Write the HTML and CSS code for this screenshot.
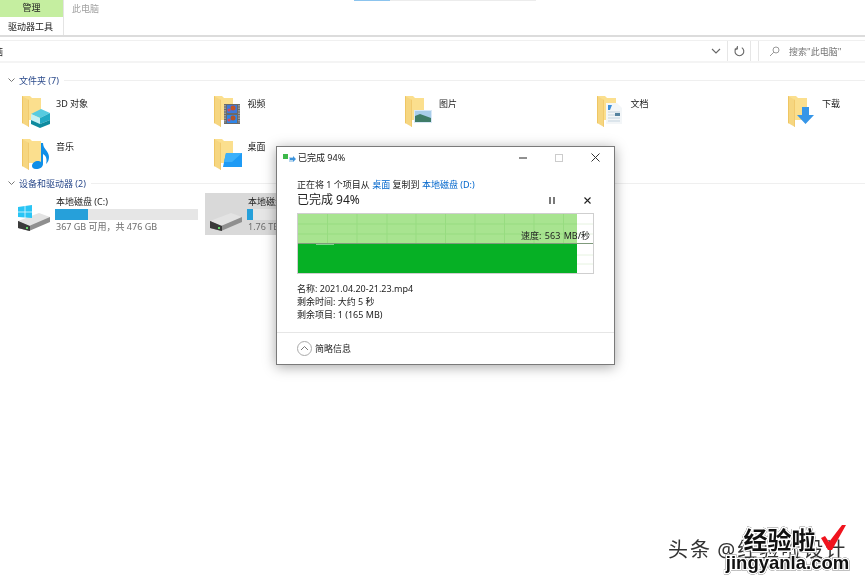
FILE: index.html
```html
<!DOCTYPE html>
<html lang="zh-CN">
<head>
    <meta charset="UTF-8">
    <title>此电脑</title>
    <link rel="stylesheet" href="styles.css">
</head>
<body>
    <svg class="defs" width="0" height="0">
        <symbol id="folder" viewBox="0 0 32 34">
            <path d="M2 1h8l2 2h9v22H2z" fill="#fbdf8e"/>
            <path d="M2 1l7 4v27l-7-4z" fill="#f6d680"/>
            <path d="M2 1v27l.8.5V1.500z" fill="#eec25c"/>
            <path d="M9 5v27l-.8-.5V4.500z" fill="#f0c76a"/>
        </symbol>
        <symbol id="drive" viewBox="0 0 32 18">
            <path d="M0 8L21 0l11 4v4L10 13z" fill="#e3e3e3"/>
            <path d="M0 8l11 5 21-9v5L11 18 0 15z" fill="#8f8f8f"/>
            <path d="M0 8l12 5v5L0 15z" fill="#3a3a3a"/>
            <rect x="8" y="14" width="2" height="2" fill="#63d86a"/>
        </symbol>
    </svg>

    <div class="page">
        <!-- Ribbon -->
        <header class="ribbon">
            <div class="tab-group">
                <div class="tab-manage">管理</div>
                <div class="tab-tools">驱动器工具</div>
            </div>
            <div class="ribbon-title">此电脑</div>
            <div class="ribbon-mark"></div>
        </header>

        <!-- Address bar -->
        <div class="address">
            <div class="path">
                <span class="path-text">电脑</span>
                <svg width="10" height="6" viewBox="0 0 10 6"><path d="M1 1l4 4 4-4" fill="none" stroke="#666" stroke-width="1.1"/></svg>
            </div>
            <div class="refresh">
                <svg width="11" height="11" viewBox="0 0 11 11"><path d="M7.8 1.600A4.400 4.400 0 1 1 3 1.600" fill="none" stroke="#666" stroke-width="1.1"/><path d="M3.400 0v3.200H.6" fill="none" stroke="#666" stroke-width="1"/></svg>
            </div>
            <div class="search">
                <svg width="11" height="11" viewBox="0 0 11 11"><circle cx="7" cy="4" r="3" fill="none" stroke="#999"/><path d="M4.800 6.200L1 10" stroke="#999"/></svg>
                <span>搜索"此电脑"</span>
            </div>
        </div>

        <!-- Folders -->
        <div class="group-head">
            <svg width="7" height="5" viewBox="0 0 7 5"><path d="M.5.5l3 3 3-3" fill="none" stroke="#777"/></svg>
            <span>文件夹 (7)</span>
            <i></i>
        </div>
        <div class="folders">
            <div class="folder">
                <svg width="32" height="34" viewBox="0 0 32 34">
                    <use href="#folder" width="32" height="34"/>
                    <path d="M11 19l10-5 9 4-10 5z" fill="#57cbe0"/>
                    <path d="M11 19l9 4v6l-9-4z" fill="#c4f0f3"/>
                    <path d="M20 23l10-5v7l-10 4z" fill="#22a9c4"/>
                    <path d="M11 25l9 4 10-4v4l-10 4-9-4z" fill="#0e8a9e"/>
                </svg>
                <span>3D 对象</span>
            </div>
            <div class="folder">
                <svg width="32" height="34" viewBox="0 0 32 34">
                    <use href="#folder" width="32" height="34"/>
                    <rect x="12" y="9" width="16" height="20" fill="#6a6a6a"/>
                    <path d="M13 10v18M27 10v18" stroke="#c8c8c8" stroke-width="1" stroke-dasharray="1.500 1"/>
                    <rect x="15" y="10" width="10" height="8" fill="#3f78d8"/>
                    <rect x="15" y="20" width="10" height="8" fill="#2f86e8"/>
                    <circle cx="21" cy="13" r="2.500" fill="#c2532a"/>
                    <circle cx="17" cy="15" r="1.500" fill="#d8485a"/>
                    <circle cx="21" cy="23" r="2.500" fill="#b25428"/>
                    <circle cx="17" cy="25" r="1.500" fill="#d8485a"/>
                </svg>
                <span>视频</span>
            </div>
            <div class="folder">
                <svg width="32" height="34" viewBox="0 0 32 34">
                    <use href="#folder" width="32" height="34"/>
                    <rect x="11" y="15" width="18" height="13" fill="#d8e8f8"/>
                    <rect x="12" y="16" width="16" height="11" fill="#a8cdea"/>
                    <path d="M12 21l5-2 11 4v4H12z" fill="#3f7c68"/>
                </svg>
                <span>图片</span>
            </div>
            <div class="folder">
                <svg width="32" height="34" viewBox="0 0 32 34">
                    <use href="#folder" width="32" height="34"/>
                    <path d="M11 8h11l5 5v16H11z" fill="#f3f6f8"/>
                    <path d="M13 10h4l-2 5h-2z" fill="#3d8fd8"/>
                    <path d="M13 17h12M13 20h8M13 23h12M13 26h12" stroke="#c5d4df"/>
                    <rect x="20" y="18" width="5" height="3" fill="#56839f"/>
                </svg>
                <span>文档</span>
            </div>
            <div class="folder">
                <svg width="32" height="34" viewBox="0 0 32 34">
                    <use href="#folder" width="32" height="34"/>
                    <path d="M16 12h7v8h5l-8.500 9L11 20h5z" fill="#3696e8"/>
                </svg>
                <span>下载</span>
            </div>
            <div class="folder">
                <svg width="32" height="34" viewBox="0 0 32 34">
                    <use href="#folder" width="32" height="34"/>
                    <path d="M21 5h2c0 6 6 8 6 14 0 3-1 5-3 7 1-3 1-8-3-10v10c0 3-3 5-7 5-3 0-4-2-4-3 0-3 3-5 6-5 1 0 2 0 3 1z" fill="#0f8fe8"/>
                </svg>
                <span>音乐</span>
            </div>
            <div class="folder">
                <svg width="32" height="34" viewBox="0 0 32 34">
                    <use href="#folder" width="32" height="34"/>
                    <path d="M14 15h16v14H11z" fill="#1e9bf5"/>
                    <path d="M14 15h16L20 24H12z" fill="#3cb0fa"/>
                </svg>
                <span>桌面</span>
            </div>
        </div>

        <!-- Drives -->
        <div class="group-head drives-head">
            <svg width="7" height="5" viewBox="0 0 7 5"><path d="M.5.5l3 3 3-3" fill="none" stroke="#777"/></svg>
            <span>设备和驱动器 (2)</span>
            <i></i>
        </div>
        <div class="drives">
            <div class="drive">
                <svg class="drive-icon" width="32" height="26" viewBox="0 0 32 26">
                    <use href="#drive" y="8" width="32" height="18"/>
                    <path d="M0 2l14-2v13l-14-1z" fill="#29c5f5"/>
                    <path d="M7 1v12M0 7h14" stroke="#e6f8fe" stroke-width=".8"/>
                </svg>
                <div class="drive-info">
                    <div class="drive-name">本地磁盘 (C:)</div>
                    <div class="bar"><div class="bar-fill" style="width: 23%"></div></div>
                    <div class="drive-size">367 GB 可用，共 476 GB</div>
                </div>
            </div>
            <div class="drive selected">
                <svg class="drive-icon" width="32" height="26" viewBox="0 0 32 26">
                    <use href="#drive" y="8" width="32" height="18"/>
                </svg>
                <div class="drive-info">
                    <div class="drive-name">本地磁盘 (D:)</div>
                    <div class="bar"><div class="bar-fill" style="width: 4%"></div></div>
                    <div class="drive-size">1.76 TB 可用，共 1.81 TB</div>
                </div>
            </div>
        </div>

        <!-- Copy progress window -->
        <div class="dialog">
            <div class="dialog-title">
                <svg width="13" height="10" viewBox="0 0 13 10"><rect x="0" y="1" width="5" height="5" fill="#3cb84a"/><rect x="6" y="4" width="4" height="5" fill="#b9d7ef"/><path d="M7 5h3V3l3 3-3 3V7H7z" fill="#3d94dc"/></svg>
                <span class="dialog-name">已完成 94%</span>
                <div class="win-btns">
                    <svg width="8" height="8" viewBox="0 0 8 8"><path d="M0 4h8" stroke="#222"/></svg>
                    <svg width="8" height="8" viewBox="0 0 8 8"><rect x=".5" y=".5" width="7" height="7" fill="none" stroke="#ccc"/></svg>
                    <svg width="9" height="9" viewBox="0 0 9 9"><path d="M.5.5l8 8M8.500.5l-8 8" stroke="#333"/></svg>
                </div>
            </div>
            <div class="dialog-body">
                <div class="copy-line">正在将 1 个项目从 <a>桌面</a> 复制到 <a>本地磁盘 (D:)</a></div>
                <div class="progress-head">
                    <span class="progress-text">已完成 94%</span>
                    <svg width="6" height="7" viewBox="0 0 6 7"><path d="M1 0v7M5 0v7" stroke="#222" stroke-width="1.2"/></svg>
                    <svg width="7" height="7" viewBox="0 0 7 7"><path d="M.5.5l6 6M6.500.5l-6 6" stroke="#222" stroke-width="1.1"/></svg>
                </div>
                <div class="graph">
                    <svg width="295" height="59" viewBox="0 0 295 59">
                        <rect width="295" height="59" fill="#fff"/>
                        <path d="M279 10h16M279 20h16M279 41h16M279 50h16" stroke="#e6f3e0"/>
                        <rect width="279" height="30" fill="#a8e490"/>
                        <path d="M29.500 0v30M59 0v30M89 0v30M118 0v30M147.500 0v30M177 0v30M206.500 0v30M236 0v30M265.500 0v30M0 10h279M0 20h279" stroke="#97dc80"/>
                        <rect y="30" width="279" height="29" fill="#06b025"/>
                        <rect x="18" y="30" width="18" height="1" fill="#7ed58a"/>
                        <path d="M0 29.500h295" stroke="#7f9a7b"/>
                    </svg>
                    <span class="speed">速度: 563 MB/秒</span>
                </div>
                <div class="details">
                    <div>名称: 2021.04.20-21.23.mp4</div>
                    <div>剩余时间: 大约 5 秒</div>
                    <div>剩余项目: 1 (165 MB)</div>
                </div>
            </div>
            <div class="dialog-foot">
                <svg width="15" height="15" viewBox="0 0 15 15"><circle cx="7.500" cy="7.500" r="7" fill="none" stroke="#aaa"/><path d="M4 9l3.500-3.500L11 9" fill="none" stroke="#777"/></svg>
                <span>简略信息</span>
            </div>
        </div>

        <!-- Watermark -->
        <div class="wm-source">头条 @经验啦设计</div>
        <div class="wm-brand">
            <span class="wm-title">经验啦</span>
            <span class="wm-url">jingyanla.com</span>
        </div>
        <svg class="wm-check" width="25" height="26" viewBox="0 0 25 26"><path d="M0 13l4-2 4 6L21 0h4L11 25H7z" fill="#f0141e"/></svg>
    </div>
</body>
</html>
```

FILE: styles.css
```css
/* General styling */
body {
    margin: 0;
    background-color: #fff;
    font-family: "Noto Sans", "Noto Sans CJK SC", sans-serif;
    font-size: 9px;
    color: #222;
}

.defs {
    position: absolute;
}

.page {
    position: relative;
    width: 865px;
    height: 577px;
    overflow: hidden;
    filter: blur(0.3px);
}

svg {
    display: block;
    flex-shrink: 0;
}

/* Ribbon */
.ribbon {
    display: flex;
    height: 35px;
    border-bottom: 2px solid #dcdcdc;
}

.tab-group {
    width: 63px;
    border-right: 1px solid #e4e4e4;
}

.tab-manage {
    height: 17px;
    line-height: 16px;
    background-color: #c5eea0;
    text-align: center;
}

.tab-tools {
    height: 18px;
    line-height: 19px;
    padding-left: 8px;
}

.ribbon-title {
    margin-left: 8px;
    line-height: 17px;
    color: #a0a0a0;
}

.ribbon-mark {
    width: 182px;
    height: 1px;
    margin-left: 255px;
    background: linear-gradient(to right, #8cc4ee 36px, #ececec 36px);
}

/* Address bar */
.address {
    display: flex;
    height: 20px;
    margin-top: 3px;
    border-top: 1px solid #f0f0f0;
    border-bottom: 2px solid #f4f4f4;
}

.path {
    display: flex;
    align-items: center;
    justify-content: space-between;
    width: 727px;
    padding-right: 6px;
    box-sizing: border-box;
    overflow: hidden;
}

.path-text {
    margin-left: -15px;
}

.refresh {
    display: flex;
    align-items: center;
    justify-content: center;
    width: 22px;
    border-left: 1px solid #e6e6e6;
    border-right: 1px solid #e6e6e6;
}

.search {
    display: flex;
    align-items: center;
    gap: 9px;
    flex-grow: 1;
    margin-left: 7px;
    padding-left: 10px;
    border-left: 1px solid #e6e6e6;
    color: #777;
}

/* Groups */
.group-head {
    display: flex;
    align-items: center;
    gap: 4px;
    height: 14px;
    margin-top: 10px;
    padding-left: 8px;
    color: #2b4a8b;
}

.group-head i {
    flex-grow: 1;
    height: 1px;
    margin-left: 1px;
    background-color: #efefef;
}

.drives-head {
    margin-top: 4px;
}

.folders {
    display: grid;
    grid-template-columns: repeat(5, 191.5px);
    row-gap: 9px;
    margin-top: 8px;
    padding-left: 20px;
}

.folder {
    display: flex;
    gap: 4px;
    height: 34px;
    line-height: 17px;
}

.drives {
    display: grid;
    grid-template-columns: repeat(2, 192px);
    margin-top: 3px;
    padding-left: 13px;
}

.drive {
    display: flex;
    gap: 5px;
    width: 190px;
    height: 42px;
    padding: 2px 5px;
    box-sizing: border-box;
}

.drive.selected {
    background-color: #d9d9d9;
}

.drive-icon {
    margin-top: 10px;
}

.drive-info {
    flex-grow: 1;
}

.drive-name {
    height: 13px;
    line-height: 13px;
    padding-left: 1px;
}

.bar {
    height: 11px;
    margin-top: 1px;
    background-color: #e6e6e6;
}

.bar-fill {
    height: 100%;
    background-color: #26a0da;
}

.drive-size {
    line-height: 13px;
    padding-left: 1px;
    color: #6d6d6d;
}

/* Copy dialog */
.dialog {
    position: absolute;
    top: 146px;
    left: 276px;
    width: 337px;
    height: 217px;
    background-color: #fff;
    border: 1px solid #7a7a7a;
    box-shadow: 0 2px 12px rgba(0, 0, 0, 0.35);
}

.dialog-title {
    display: flex;
    align-items: center;
    height: 21px;
    padding-left: 6px;
}

.dialog-name {
    margin-left: 2px;
}

.win-btns {
    display: flex;
    align-items: center;
    gap: 28px;
    margin-left: auto;
    padding-right: 14px;
}

.dialog-body {
    padding: 0 20px 0 20px;
}

.copy-line {
    height: 13px;
    line-height: 13px;
    margin-top: 10px;
}

.copy-line a {
    color: #0066cc;
}

.progress-head {
    display: flex;
    align-items: center;
    height: 15px;
}

.progress-text {
    flex-grow: 1;
    font-size: 12px;
}

.progress-head svg {
    margin-top: 4px;
}

.progress-head svg:first-of-type {
    margin-right: 29px;
}

.progress-head svg:last-of-type {
    margin-right: 3px;
}

.graph {
    position: relative;
    width: 295px;
    height: 59px;
    margin-top: 7px;
    border: 1px solid #cfcfcf;
}

.speed {
    position: absolute;
    top: 15px;
    right: 3px;
    word-spacing: 1px;
}

.details {
    margin-top: 8px;
    line-height: 13px;
}

.dialog-foot {
    display: flex;
    align-items: center;
    gap: 3px;
    height: 32px;
    margin-top: 11px;
    padding: 0 0 1px 20px;
    box-sizing: border-box;
    border-top: 1px solid #e6e6e6;
}

/* Watermark */
.wm-source {
    position: absolute;
    top: 534px;
    left: 668px;
    font-size: 20px;
    word-spacing: -2px;
    letter-spacing: 2px;
    color: #333;
    white-space: nowrap;
}

.wm-brand {
    position: absolute;
    top: 526px;
    left: 725px;
    width: 125px;
    text-align: center;
    color: #111;
    font-weight: 700;
    -webkit-text-stroke: 3px #fff;
    paint-order: stroke fill;
    filter: drop-shadow(0 0 0.6px #000);
}

.wm-title {
    display: block;
    font-size: 24px;
    line-height: 27px;
    margin-right: 16px;
}

.wm-url {
    display: block;
    font-family: "Liberation Sans", sans-serif;
    font-size: 18.5px;
    line-height: 20px;
    white-space: nowrap;
}

.wm-check {
    position: absolute;
    top: 525px;
    left: 821px;
}
```
